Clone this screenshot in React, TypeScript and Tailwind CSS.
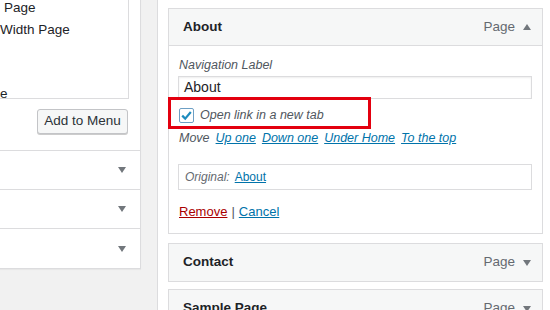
const font = { fontFamily: '"Liberation Sans", Arial, sans-serif' }

function Arrow({ up = false }: { up?: boolean }) {
  return (
    <svg width="8" height="6" viewBox="0 0 8 6" className="shrink-0" aria-hidden="true">
      <path d={up ? 'M0 6 L4 0 L8 6 Z' : 'M0 0 L8 0 L4 6 Z'} fill="#72777c" />
    </svg>
  )
}

function ItemHeader({ title }: { title: string }) {
  return (
    <div className="h-[37px] bg-[#f6f7f7] flex items-center pl-[14px] pr-[11px]">
      <span className="text-[13.5px] font-bold text-[#1d2327] flex-1">{title}</span>
      <span className="text-[13.5px] text-[#646970] mr-[8px]">Page</span>
      <Arrow />
    </div>
  )
}

const sideRows = ['a', 'b', 'c']

export default function App() {
  return (
    <div className="w-[550px] h-[310px] bg-[#f1f1f1] flex overflow-hidden" style={font}>
      {/* left: add items panel */}
      <div className="w-[141px] shrink-0">
        <div className="bg-white border-r border-[#dcdcde] shadow-[0_1px_1px_rgba(0,0,0,0.04)] border-b">
          <div className="w-[129px] h-[102px] border-r border-b border-[#dcdcde] text-[13.5px] text-[#1d2327] leading-[21.5px] -mt-[3px]">
            <div className="pl-[4px]">Page</div>
            <div>Width Page</div>
            <div>&nbsp;</div>
            <div>&nbsp;</div>
            <div>e</div>
          </div>
          <div className="h-[52px] pt-[10px] pr-[12px] flex justify-end items-start border-b border-[#dcdcde]">
            <button className="w-[91px] h-[25px] border border-[#c3c4c7] rounded-[3px] bg-[#f6f7f7] text-[13.5px] text-[#2c3338] shadow-[0_1px_0_#ccc]">
              Add to Menu
            </button>
          </div>
          {sideRows.map((r, i) => (
            <div
              key={r}
              className={`h-[39px] flex items-center justify-end pr-[14px] ${i < 2 ? 'border-b border-[#dcdcde]' : ''}`}
            >
              <Arrow />
            </div>
          ))}
        </div>
      </div>

      {/* right: menu structure */}
      <div className="flex-1 ml-[16px] bg-white border-l border-[#dcdcde] pl-[10px] pr-[7px] pt-[8px]">
        <div className="border border-[#dcdcde] relative">
          <div className="h-[37px] bg-[#f6f7f7] flex items-center pl-[14px] pr-[11px] border-b border-[#dcdcde]">
            <span className="text-[13.5px] font-bold text-[#1d2327] flex-1">About</span>
            <span className="text-[13.5px] text-[#646970] mr-[8px]">Page</span>
            <Arrow up />
          </div>
          <div className="pl-[9px] pr-[10px] pt-[11px] pb-[13px] text-[12.5px]">
            <div className="italic text-[#50575e] pl-[1px] leading-[16px]">Navigation Label</div>
            <div className="h-[23px] mt-[3px] border border-[#dcdcde] shadow-[inset_0_1px_2px_rgba(0,0,0,0.07)] flex items-center pl-[5px] text-[14px] text-[#1d2327]">
              About
            </div>
            <div className="h-[30px] flex items-center pl-[1px] mt-[1px]">
              <span className="w-[15px] h-[15px] border border-[#6d9fc4] rounded-[2px] flex items-center justify-center bg-white">
                <svg width="13" height="13" viewBox="0 0 13 13" aria-hidden="true">
                  <path d="M2.2 6.6 L5.2 9.6 L10.8 3" fill="none" stroke="#1e8cbe" strokeWidth="2.2" />
                </svg>
              </span>
              <span className="italic text-[#50575e] ml-[6px]">Open link in a new tab</span>
            </div>
            <div className="flex items-center gap-[6px] pl-[1px] h-[20px] mt-[-2px]">
              <span className="italic text-[#50575e]">Move</span>
              <a className="italic underline text-[#0073aa]">Up one</a>
              <a className="italic underline text-[#0073aa]">Down one</a>
              <a className="italic underline text-[#0073aa]">Under Home</a>
              <a className="italic underline text-[#0073aa]">To the top</a>
            </div>
            <div className="h-[26px] mt-[16px] border border-[#dcdcde] flex items-center pl-[6px] text-[12px]">
              <span className="italic text-[#646970]">Original:</span>
              <a className="ml-[5px] underline text-[#0073aa]">About</a>
            </div>
            <div className="mt-[14px] pl-[1px] text-[13px] leading-[16px]">
              <a className="underline text-[#a00]">Remove</a>
              <span className="text-[#50575e] mx-[4px]">|</span>
              <a className="underline text-[#0073aa]">Cancel</a>
            </div>
          </div>
          <div className="absolute left-[-1px] top-[88px] w-[203px] h-[32px] border-[3px] border-[#e3000f] pointer-events-none" />
        </div>

        <div className="border border-[#dcdcde] mt-[9px]">
          <ItemHeader title="Contact" />
        </div>
        <div className="border border-[#dcdcde] mt-[7px]">
          <ItemHeader title="Sample Page" />
        </div>
      </div>
    </div>
  )
}
